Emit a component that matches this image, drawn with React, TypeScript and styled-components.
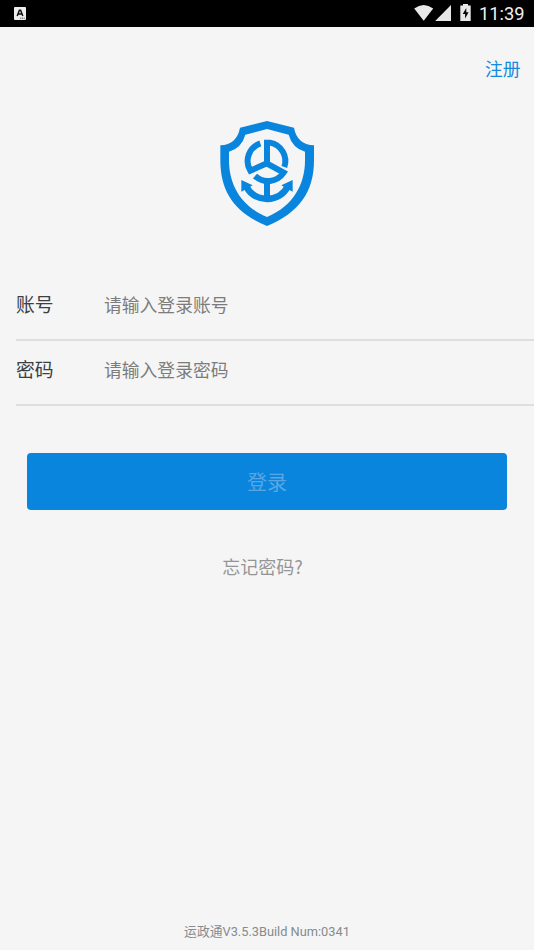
import React from "react";
import styled, { createGlobalStyle } from "styled-components";

const GlobalStyle = createGlobalStyle`
  * { box-sizing: border-box; }
  body { margin: 0; background: #f5f5f5; font-family: Roboto, "Noto Sans CJK SC", sans-serif; }
  button, input { font-family: inherit; }
`;

const Screen = styled.div`
  display: flex;
  flex-direction: column;
  width: 100%;
  height: 100vh;
  background: #f5f5f5;
  overflow: hidden;
`;

const StatusBar = styled.header`
  display: flex;
  align-items: center;
  flex: none;
  height: 27px;
  padding: 0 9px 0 14px;
  background: #000;
`;

const StatusIcons = styled.div`
  display: flex;
  align-items: center;
  margin-left: auto;
`;

const Clock = styled.span`
  width: 46px;
  margin-left: 7px;
  color: #f0f0f0;
  font-size: 18.3px;
  font-weight: 400;
  line-height: 27px;
  white-space: nowrap;
`;

const TopBar = styled.div`
  display: flex;
  justify-content: flex-end;
  flex: none;
  height: 85px;
  padding: 28px 13.5px 0 0;
`;

const TextButton = styled.button<{ $color: string; $size: number }>`
  height: 27px;
  padding: 0;
  border: 0;
  background: none;
  color: ${(p) => p.$color};
  font-family: "Noto Sans CJK SC", sans-serif;
  font-size: ${(p) => p.$size}px;
  line-height: 27px;
`;

const LogoArea = styled.div`
  display: flex;
  justify-content: center;
  flex: none;
  height: 163px;
`;

const Form = styled.form`
  display: flex;
  flex-direction: column;
  flex: none;
`;

const Field = styled.label<{ $height: number }>`
  display: flex;
  height: ${(p) => p.$height}px;
  margin-left: 16px;
  padding-top: ${(p) => p.$height - 51}px;
  border-bottom: 2px solid #dfdfdf;
`;

const FieldName = styled.span`
  width: 88px;
  color: #3a4145;
  font-size: 18.8px;
  line-height: 32px;
`;

const Input = styled.input`
  flex: 1;
  min-width: 0;
  height: 30px;
  padding: 0;
  border: 0;
  outline: 0;
  background: none;
  font-size: 17.8px;
  &::placeholder { color: #7c7c7c; opacity: 1; }
`;

const LoginButton = styled.button`
  height: 57px;
  margin: 47px 27px 0;
  padding: 3px 0 0;
  border: 0;
  border-radius: 4px;
  background: #0a85dd;
  color: #5aa5e4;
  font-size: 20px;
  line-height: 54px;
`;

const Forgot = styled.div`
  display: flex;
  justify-content: center;
  margin-top: 43px;
  padding-right: 9px;
`;

const Version = styled.footer`
  margin-top: auto;
  height: 28px;
  color: #858b8e;
  font-size: 12.8px;
  line-height: 20px;
  text-align: center;
`;

const KeyboardIcon = () => (
  <svg width="12" height="13" viewBox="0 0 12 13">
    <rect width="12" height="13" rx="1" fill="#eee" />
    <path d="M3.2 9 5.4 3.2h1.2L8.8 9M4.2 7h3.6" fill="none" stroke="#111" strokeWidth="1.5" />
    <path d="M6 11.2h5" stroke="#555" strokeWidth="1" strokeDasharray="1.2 .6" />
  </svg>
);

const SignalIcons = () => (
  <svg width="58" height="27" viewBox="0 0 58 27" fill="#e8e8e8">
    <path d="M.2 8.6Q9.7 1.5 19.2 8.6L9.7 20.7Z" />
    <path d="M37 5v16H21.2Z" />
    <path d="M49 4h5v1.6h2.7V21H46.3V5.6H49Z" />
    <path d="M52.3 8 48.7 14h2.4v4.4l3.5-6.1h-2.3Z" fill="#050505" />
  </svg>
);

const ShieldLogo = () => (
  <svg width="114" height="122" viewBox="0 0 342 366">
    <path
      d="M171 27 252 47Q261 97 312 100V145C312 240 267 303 171 342C75 303 31 240 31 145V100Q81 97 90 47ZM171 51 106 68Q95 108 57 119V145C57 216 91 282 171 315C251 282 285 216 285 145V119Q247 108 236 68Z"
      fill="#0a85dd"
      fillRule="evenodd"
    />
    <g fill="none" stroke="#0a85dd">
      <path d="M151 94A56 56 0 0 0 121 176L171 154" strokeWidth="18" />
      <path d="M171 160V92H180A56 56 0 0 1 223 165" strokeWidth="18" />
      <path d="M170 154 221 182A57 57 0 0 1 135 192" strokeWidth="18" />
      <path d="M171 198V261" strokeWidth="18" />
      <path d="M108 222Q126 259 171 261Q216 259 234 222" strokeWidth="19" />
    </g>
    <path d="M94 204 128 220 115 228 94 239ZM248 204 214 220 227 228 248 239Z" fill="#0a85dd" />
  </svg>
);

const fields = [
  { name: "账号", hint: "请输入登录账号", type: "text", height: 66 },
  { name: "密码", hint: "请输入登录密码", type: "password", height: 65 },
];

export default function App() {
  return (
    <>
      <GlobalStyle />
      <Screen>
        <StatusBar>
          <KeyboardIcon />
          <StatusIcons>
            <SignalIcons />
            <Clock>11:39</Clock>
          </StatusIcons>
        </StatusBar>
        <TopBar>
          <TextButton $color="#168bdd" $size={17.8}>注册</TextButton>
        </TopBar>
        <LogoArea>
          <ShieldLogo />
        </LogoArea>
        <Form>
          {fields.map((f) => (
            <Field key={f.name} $height={f.height}>
              <FieldName>{f.name}</FieldName>
              <Input type={f.type} placeholder={f.hint} />
            </Field>
          ))}
          <LoginButton type="button">登录</LoginButton>
        </Form>
        <Forgot>
          <TextButton $color="#959595" $size={18}>忘记密码?</TextButton>
        </Forgot>
        <Version>运政通V3.5.3Build Num:0341</Version>
      </Screen>
    </>
  );
}
